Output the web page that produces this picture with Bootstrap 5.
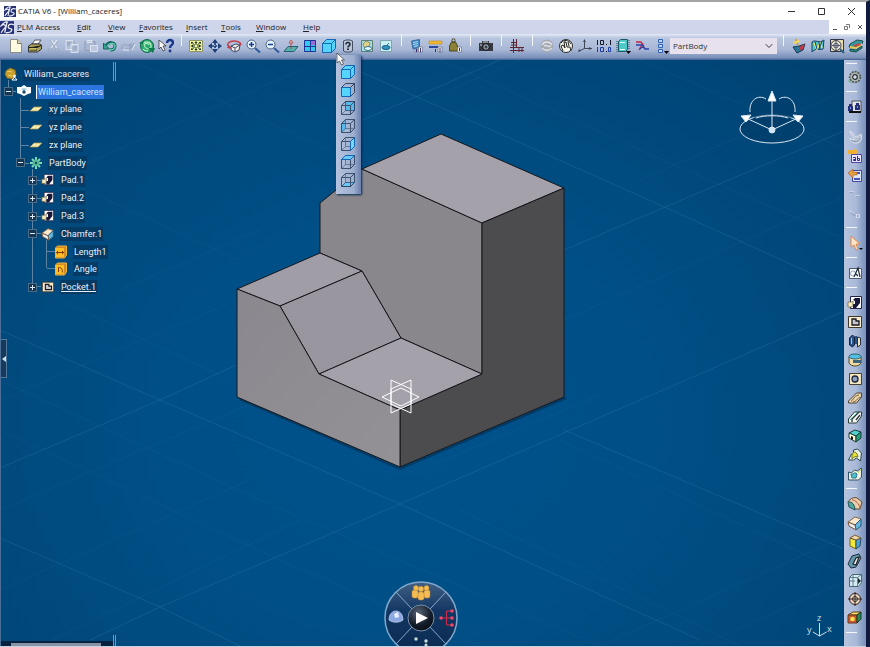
<!DOCTYPE html>
<html lang="en">
<head>
<meta charset="utf-8">
<meta name="viewport" content="width=device-width, initial-scale=1">
<title>CATIA V6 - [William_caceres]</title>
<link href="https://cdn.jsdelivr.net/npm/bootstrap@5.3.0/dist/css/bootstrap.min.css" rel="stylesheet">
<style>
body{font-family:"Open Sans","Noto Sans",sans-serif;font-size:8px;line-height:12px;color:#222;background:#0a1630}
svg{display:block}
.app-shell{border-top:2px solid #a5a5a5;border-right:4px solid #101a3c}
.title-bar{height:18px;background:#fff;padding-left:4px}
.title-text{padding-left:2px}
.menu-bar{height:14px;background:#cfd5ea}
.menu-bar a{color:#222;text-decoration:none}
.m-items{padding-left:3px}
.mi-1{width:60px}.mi-2{width:31px}.mi-3{width:47px}.mi-4{width:35px}
.win-btn{width:30px;height:16px}
.mdi-set{background:#fff;width:37px;height:14px}
.plain{border:0;padding:0;background:none;display:flex;align-items:center;justify-content:center;min-width:0}
.tool-bar{height:26px;padding-left:7px;background:linear-gradient(#e6eaf5,#b9c6df 15%,#a8b7d5 60%,#7890b9 92%,#3c5d8d)}
.tool-bar svg,.rail svg{width:16px;height:16px}
.grp{height:24px}
.g9{width:168px}.g11{width:208px}.g3{width:57px}.g1{width:19px}.g7{width:132px}.g4{width:76px}
.sep{width:12px;height:24px;flex:none}
.sep::before{content:"";display:block;width:1px;height:11px;margin:1px auto 0;background:#f4f6fb}
.body-pick{width:107px;height:16px;font-size:8px;line-height:12px;padding:0 12px 0 2px;border:1px solid #e9e3ef;border-radius:0;background-color:#e6e1ec;color:#333;background-position:right 3px center;background-size:8px 8px;flex:none}
.rail{width:23px;border-left:1px solid #22334f;background:linear-gradient(90deg,#b7c4de,#a9b9d8 55%,#7890bb);padding-bottom:6px}
.rail button{width:22px;height:19px}
.rule{height:11px;padding:5px 0 0 2px}
.rule::before{content:"";display:block;width:11px;height:1px;background:#f4f6fb}
.rule-top{height:7px;padding-top:3px}
.view{background:radial-gradient(ellipse at 48% 62%,#00528c 0,#005087 35%,#00487b 75%,#004271 100%);border-left:1px solid #4b6f96}
.fly{left:17px;top:21px;width:25px;padding:8px 0 5px;z-index:5;background:linear-gradient(90deg,#b4c2dd,#9dafd0 70%,#6880ac);box-shadow:1px 1px 2px #002b50}
.fly button{width:24px;height:18px}
.pointer{left:17px;top:17px;z-index:6;pointer-events:none}
.tree{height:231px;width:112px;margin-top:5px;color:#e6eff7;font-family:Roboto,"Open Sans",sans-serif;font-size:9px}
.tree-lines{left:0;top:0;z-index:0}
.twig{flex:1 1 0;min-height:0}
.twig svg{flex:none;width:14px;height:14px}
.twig a{color:inherit;text-decoration:none;background:#063b65;line-height:14px;padding:0 1px;margin-left:5px;white-space:nowrap}
.twig .picked{background:#2c74e0;color:#cfe4ff;border-left:1px solid #fff}
.twig .under{text-decoration:underline}
.lv0,.lv1{padding-left:3px}.lv2{padding-left:28px}.lv2x{padding-left:15px}.lv3{padding-left:27px}.lv4{padding-left:53px}
.expand{width:9px;height:9px;border:1px solid #4d6c88;background:#123654;color:#fff;position:relative}
.expand::before,.plus::after{content:"";position:absolute;background:#dbe9f5;left:1px;top:3px;width:5px;height:1px}
.plus::after{left:3px;top:1px;width:1px;height:5px}
.lv1 .expand,.lv2x .expand,.lv3 .expand{flex:none;margin-right:4px}
.split{left:112px;width:3px;border:solid #7396b8;border-width:0 1px}
.split-a{top:2px;height:19px}.split-b{bottom:0;height:11px}
.handle{left:0;top:279px;width:6px;height:39px;background:#163a5c;border:1px solid #54789b;border-left:0}
.status{left:0;bottom:0;width:112px;height:5px;background:#06213f;padding:2px 12px 0 10px}
.status div{height:3px;background:#8693a5}
.compass{right:34px;top:29px}.axes{right:8px;bottom:5px}.wheel{left:50%;bottom:0;margin-left:-39px}
.axes text{font-size:9px;fill:#cfe0ee}
.bottom-edge{height:1px;background:#c9d3de}
</style>
<script src="https://cdn.jsdelivr.net/npm/bootstrap@5.3.0/dist/js/bootstrap.bundle.min.js"></script>
</head>
<body>
<svg width="0" height="0" class="position-absolute" aria-hidden="true">
<defs>
<linearGradient id="gLeft" x1="0" y1="0" x2="1" y2="1"><stop offset="0" stop-color="#8a888e"/><stop offset="1" stop-color="#949196"/></linearGradient>
<radialGradient id="gBall" cx=".4" cy=".3" r=".8"><stop offset="0" stop-color="#56657a"/><stop offset=".6" stop-color="#131c28"/><stop offset="1" stop-color="#070b12"/></radialGradient>
<linearGradient id="gWheel" x1="0" y1="0" x2="0" y2="1"><stop offset="0" stop-color="#426084"/><stop offset=".4" stop-color="#123763"/><stop offset="1" stop-color="#0b2a50"/></linearGradient>
</defs>
<symbol id="logo" viewBox="0 0 12 11"><path fill="#252f72" d="M0 0h12v11H0z"/><path fill="none" stroke="#e8ebf6" stroke-width="1.100" d="M7 1C5 0 2 2 1 4c3-2 5 0 3 2-1 1-2 2-3 4M12 3c-3-1-5 0-5 2s4 1 3 3-3 2-5 2M6 1L4 10"/></symbol>
<symbol id="new" viewBox="0 0 16 16"><path fill="#fffbe0" stroke="#8c8c86" d="M2.500 1.500h7l4 4v9h-11z"/><path fill="#d8d4b0" stroke="#777" d="M9.500 1.500v4h4"/></symbol>
<symbol id="print" viewBox="0 0 16 16"><path fill="#fff" stroke="#555" d="M5 6l3-4h6l-3 4z"/><path fill="#aaa25a" stroke="#333" d="M1.500 8l3-2h8l2 1v4l-4 3h-9z"/><path stroke="#222" d="M2 9.500h8l4-2M3 12h7"/><path stroke="#e8e060" d="M3 11h6"/></symbol>
<symbol id="cut" viewBox="0 0 16 16"><path fill="none" stroke="#dfe5f0" stroke-width="1.500" d="M5 2l6 9M11 2L5 11"/><g fill="none" stroke="#9aa7c0"><path d="M4 2l6 9M12 3L6 11"/><circle cx="4.500" cy="12.500" r="2"/><circle cx="11" cy="12.500" r="2"/></g></symbol>
<symbol id="copy" viewBox="0 0 16 16"><path fill="#b1bed8" stroke="#dbe2ee" d="M2 2.500h7v9H2zM7 6.500h7v8H7z"/><path stroke="#8e9cb7" d="M3 5h4M3 7h3M8 9h5M8 11h5M10 2.500V6"/></symbol>
<symbol id="paste" viewBox="0 0 16 16"><path fill="#a9b7d1" stroke="#8d9bb7" d="M2 3.500h10v9H2z"/><path fill="#bcc7dd" stroke="#dfe5f0" d="M7.500 7.500h7v6h-7zM4 2.500h5v2H4z"/></symbol>
<symbol id="undo" viewBox="0 0 16 16"><path fill="none" stroke="#14655f" stroke-width="3" d="M4 8c3-5 9-4 9 0s-3 4-5 4"/><path fill="#34a68e" stroke="#14655f" d="M1.500 5v6h6z"/><path fill="none" stroke="#62d2b6" stroke-width="1.300" d="M5 8c3-4 8-3 8 0s-3 4-5 4"/></symbol>
<symbol id="redo" viewBox="0 0 16 16"><path fill="none" stroke="#8e9db8" d="M2 11c-1-6 5-5 6-3l2-2v5H5M11 11l3-6M11 5v6"/><path fill="none" stroke="#e2e8f2" d="M3 12h6M12 12l3-6"/></symbol>
<symbol id="update" viewBox="0 0 16 16"><circle cx="8" cy="8" r="6.500" fill="#29a870" stroke="#116846"/><path fill="none" stroke="#a8eab8" stroke-width="1.300" d="M3 7c2-4 8-4 9 0s-4 5-6 2 2-5 4-2M4 11c1 2 3 2 5 2"/><path fill="#0f7b4d" d="M9 10h7l-2 5zM0 5l5-3-1 5z"/></symbol>
<symbol id="help" viewBox="0 0 16 16"><path fill="#fff" stroke="#333" stroke-width=".8" d="M1 2v9l2-2 2 4 2-1-2-4h3z"/><path fill="none" stroke="#17368a" stroke-width="2.300" d="M9 5c0-4 6-4 6 0 0 2-3 2-3 5"/><circle cx="12" cy="13" r="1.400" fill="#17368a"/></symbol>
<symbol id="fit" viewBox="0 0 16 16"><path fill="#f8f69b" stroke="#8c9467" d="M1.500 2.500h13v11h-13z"/><path stroke="#17342a" d="M8 4v3M8 9v3M4 8h3M9 8h3M4 4.500L6.500 7M12 4.500L9.500 7M4 11.500L6.500 9M12 11.500L9.500 9"/><path fill="#17342a" d="M6.500 5L8 3l1.500 2zM6.500 11L8 13l1.500-2zM5 6.500L2.500 8 5 9.500zM11 6.500L13.500 8 11 9.500zM3 4h2.500L3 6zM13 4h-2.500L13 6zM3 12h2.500L3 10zM13 12h-2.500L13 10z"/></symbol>
<symbol id="pan" viewBox="0 0 16 16"><path stroke="#1e3f77" stroke-width="1.700" stroke-dasharray="2 1" d="M8 2v12M2 8h12"/><path fill="#1e3f77" d="M5 5l3-4 3 4zM5 11l3 4 3-4zM5 5L1 8l4 3zM11 5l4 3-4 3z"/><path fill="#b9cdec" d="M5.500 5.500H7V7H5.500zM9 5.500h1.500V7H9zM5.500 9H7v1.500H5.500zM9 9h1.500v1.500H9z"/></symbol>
<symbol id="spin" viewBox="0 0 16 16"><path fill="#f1efe8" stroke="#434c69" d="M5 8l5-2 4 1-1 5-4 2-4-2z"/><path fill="none" stroke="#434c69" d="M5 8l4 2 5-3M9 10v4"/><path fill="none" stroke="#c43b48" stroke-width="1.500" d="M3 9C0 6 3 3 8 3s8 3 6 4"/><path fill="#c43b48" d="M1 10l5 1-3-4z"/></symbol>
<symbol id="zin" viewBox="0 0 16 16"><circle cx="6.500" cy="6.500" r="4.500" fill="#e3f1f9" stroke="#4a5f80"/><path stroke="#173c91" stroke-width="1.500" d="M6.500 4v5M4 6.500h5"/><path stroke="#345d9d" stroke-width="2.200" d="M10 10l5 4.500"/></symbol>
<symbol id="zout" viewBox="0 0 16 16"><circle cx="6.500" cy="6.500" r="4.500" fill="#e3f1f9" stroke="#4a5f80"/><path stroke="#173c91" stroke-width="1.500" d="M4 6.500h5"/><path stroke="#345d9d" stroke-width="2.200" d="M10 10l5 4.500"/></symbol>
<symbol id="normal" viewBox="0 0 16 16"><path fill="#55b2a9" stroke="#285d77" d="M1 13.500l4-5h10l-4 5z"/><path stroke="#a94457" d="M8 11V4"/><path fill="#f2e4d1" stroke="#b65359" d="M6 5l2-3 2 3z"/></symbol>
<symbol id="multi" viewBox="0 0 16 16"><path fill="#35cbe8" stroke="#1e3399" d="M2.500 2.500h11v11h-11z"/><path fill="#9c6ad6" d="M9 3h4v4H9z"/><path stroke="#1e3399" d="M8.500 3v10M3 8.500h10"/></symbol>
<symbol id="cube" viewBox="0 0 16 16"><path fill="#57d4fb" stroke="#1467b4" d="M1.500 5.500l4-4h9v9l-4 4h-9z"/><path fill="none" stroke="#1467b4" d="M1.500 5.500h9v9M10.500 5.500l4-4"/></symbol>
<symbol id="wire" viewBox="0 0 16 16"><path fill="none" stroke="#33455f" stroke-width=".9" d="M1.500 5.500h9v9h-9zM1.500 5.500l4-4h9v9l-4 4M10.500 5.500l4-4"/><path fill="none" stroke="#4c607e" stroke-width=".7" d="M5.500 1.500v9h9M1.500 14.500l4-4"/></symbol>
<symbol id="q" viewBox="0 0 16 16"><path fill="#bac4d8" stroke="#444d62" d="M3.500 3c2-1.500 7-1.500 9 0v10c-2 1.500-7 1.500-9 0z"/><path fill="none" stroke="#222939" stroke-width="1.600" d="M6 6.500c0-3 4-2.500 4 0 0 1.500-2 1-2 3"/><path fill="#222939" d="M7 10.500h2v1.500H7z"/></symbol>
<symbol id="hide" viewBox="0 0 16 16"><path fill="#a8dde0" stroke="#5d8075" d="M2.500 2.500h11v11h-11z"/><path fill="#e4d38a" stroke="#7a7448" stroke-width=".7" d="M4 6l3-3 4 2-1 4-4 2z"/><ellipse cx="9" cy="10.500" rx="3.500" ry="2" fill="#e9fafa" stroke="#28709c"/></symbol>
<symbol id="swap" viewBox="0 0 16 16"><path fill="#c9f1f4" stroke="#7ea3aa" d="M2.500 2.500h11v11h-11z"/><ellipse cx="8" cy="9.500" rx="4" ry="2" fill="#2e98bd" stroke="#205c88"/><path fill="none" stroke="#2f8093" d="M8 8l3-3"/></symbol>
<symbol id="stackA" viewBox="0 0 16 16"><path fill="#458bc6" stroke="#3c6ba5" d="M2.500 3l8-1.500v8L4 11z"/><path stroke="#a9d9ef" d="M4 4.500l5-1M4 6.500l5-1M5 8.500l4-1"/><path fill="#f3f4f8" stroke="#6a7084" stroke-width=".7" d="M9.500 9h4v5h-4zM6 11h2v3H6z"/><path stroke="#352f72" d="M11.500 10v4M7.500 11v3"/></symbol>
<symbol id="ruler" viewBox="0 0 16 16"><path fill="#f0b92d" stroke="#c18a2a" stroke-width=".6" d="M1 3h13v3H1z"/><path stroke="#29489d" stroke-width="2" d="M1 9h9"/><path fill="#f3f4f8" stroke="#6a7084" stroke-width=".7" d="M10 9h4v5h-4z"/><path stroke="#352f72" d="M12 10v4M7.500 11v3"/></symbol>
<symbol id="mass" viewBox="0 0 16 16"><path fill="#8d8135" stroke="#4a4423" d="M3.500 6l1-2h4l1 2 1 2v5h-8V8z"/><circle cx="6.500" cy="2.500" r="1.700" fill="none" stroke="#4a4423"/><path fill="#f3f4f8" stroke="#6a7084" stroke-width=".7" d="M10.500 9h4v5h-4z"/><path stroke="#352f72" d="M12.500 10v3"/></symbol>
<symbol id="camera" viewBox="0 0 16 16"><path fill="#353741" d="M1 5h3V3h7v2h4v8H1z"/><circle cx="8" cy="9" r="3.300" fill="#9da3ae" stroke="#111"/><circle cx="8" cy="9" r="1.500" fill="#30404d"/><path stroke="#d9dde4" d="M5 4h5M2 7h2"/></symbol>
<symbol id="hash" viewBox="0 0 16 16"><path fill="none" stroke="#5a2433" d="M4.500 1v14M7.500 1v8.500M1 9.500h14M1 12.500h14M2 4.500h6M2 7h6M10 9v5M13 9v5"/></symbol>
<symbol id="swirl" viewBox="0 0 16 16"><circle cx="8" cy="8" r="6.500" fill="#a5a9b1"/><path fill="none" stroke="#e2e5ea" stroke-width="1.300" d="M3 7c2-4 8-4 10 0M3 10c2 3 8 3 10 0M5 8c2-2 4 2 7 0"/></symbol>
<symbol id="globe" viewBox="0 0 16 16"><circle cx="8" cy="8" r="6.500" fill="#f5f5ed" stroke="#2b2d30"/><path fill="none" stroke="#222" d="M5 13L3 8l2-1 2 3-1-6h2l1 5h3l1 4M3 5c3-4 8-3 10 1M10 4l1 4"/></symbol>
<symbol id="axis" viewBox="0 0 16 16"><path fill="none" stroke="#404757" d="M7.500 2v8.500H15M7.500 10.500L2 13"/><path fill="#404757" d="M6 4l1.500-3L9 4zM12 9l3 1.500-3 1.500zM1 14l1-3 2 2z"/></symbol>
<symbol id="dims" viewBox="0 0 16 16"><path fill="none" stroke="#171b2d" d="M1.500 2v5M4.500 2.500h3v4h-3zM14.500 2v5"/><path fill="none" stroke="#1b3eab" d="M1.500 9v5M4.500 9.500h3v4h-3zM12.500 9.500h2v4h-2z"/><path fill="#111" d="M10 6h1v1h-1zM10 13h1v1h-1z"/></symbol>
<symbol id="film" viewBox="0 0 16 16"><path fill="#4ec9c9" stroke="#195666" d="M3.500 3.500l2-2h7v10l-2 2h-7z"/><path stroke="#134a56" stroke-dasharray="1 1" d="M2 3v11M14 2v10"/><path fill="none" stroke="#e1ffff" d="M5 4.500h5M5 11.500h5"/><path fill="#000" d="M11 13h5l-2.500 3z"/></symbol>
<symbol id="fx" viewBox="0 0 16 16"><path fill="none" stroke="#c62b3d" stroke-width="1.400" d="M2 4h5l4 7M5 12l4-7"/><path fill="none" stroke="#2d42aa" stroke-width="1.300" d="M2 7h6l3 4h4M6 11l4-4"/></symbol>
<symbol id="list" viewBox="0 0 16 16"><path fill="#c5d4f0" stroke="#2d62b8" d="M5.500 1.500h4v3h-4zM5.500 6.500h4v3h-4zM5.500 11.500h4v3h-4z"/><path fill="#000" d="M11 13h5l-2.500 3z"/></symbol>
<symbol id="boatA" viewBox="0 0 16 16"><path fill="#29799a" stroke="#153950" d="M2 9l6-1 6-2-2 6-6 3z"/><path fill="#ca3246" d="M8 9l6-3-2 5-4 2z"/><path stroke="#c49d41" stroke-width="1.500" d="M5 1l2 7"/><path fill="#f1d85a" d="M2 4l6-2 1 2-6 2z"/></symbol>
<symbol id="mapA" viewBox="0 0 16 16"><path fill="#4ec8be" stroke="#1c386a" d="M2 4c4-3 7 2 12-2l-1 9c-5 2-6-2-11 3z"/><path fill="none" stroke="#e8ea5e" stroke-width="1.500" d="M4 5l3 6 3-6 2 5"/><path stroke="#203880" d="M5 4l2 7M9 4l1 7M12 3l-3 8"/></symbol>
<symbol id="target" viewBox="0 0 16 16"><path fill="#e8dcac" stroke="#333447" d="M1.500 1.500h13v12h-13z"/><circle cx="7" cy="7.500" r="5" fill="#e9e4d2" stroke="#3a4053"/><circle cx="7" cy="7.500" r="2.300" fill="none" stroke="#49516a"/><path stroke="#555b70" d="M7 3v9M3 7.500h8"/><path stroke="#2b5d84" stroke-width="2" d="M11 11l4 4"/></symbol>
<symbol id="layers" viewBox="0 0 16 16"><path fill="#309b9b" stroke="#234e56" d="M2 6l7-4 6 1-1 3-7 4-6-1z"/><path fill="#e3ce4c" d="M2 8l6 1 6-4v3l-7 3-5-1z"/><path fill="#c2454a" d="M5 7l7-2 1 2-6 2z"/><path fill="#2b9290" stroke="#184b4a" d="M2 11l6 1 6-4v2l-6 4-6-1z"/></symbol>
<symbol id="gear" viewBox="0 0 16 16"><circle cx="8" cy="8" r="5.300" fill="#b1b8b4" stroke="#4f5b5a" stroke-width="1.800" stroke-dasharray="2 1"/><circle cx="8" cy="8" r="2.300" fill="#dde" stroke="#26302f" stroke-width="1.200"/><path stroke="#63b776" d="M1 12l4 2"/></symbol>
<symbol id="bino" viewBox="0 0 16 16"><path fill="#dfe3ea" stroke="#222" stroke-width=".7" d="M5 2h9v11H5z"/><path fill="#242f77" d="M1 7h5v5H1zM8 6h5v5H8zM2 5h3v2H2zM9 4h3v2H9z"/><path fill="#7d9be0" d="M3 8h1v2H3zM10 7h1v2h-1z"/><path stroke="#111" stroke-width="2" d="M2 13h12"/></symbol>
<symbol id="moon" viewBox="0 0 16 16"><path fill="#bbc4d5" stroke="#dde3ee" d="M3 2c1 2 4 1 4 4s5 1 7-1c2 5-1 10-6 9-2 0-5-2-5-5 1 1 3 2 4 1 1-2-4-3-4-8z"/><path fill="none" stroke="#8491ad" d="M4 11c3 3 8 2 9-2"/></symbol>
<symbol id="tagA" viewBox="0 0 16 16"><path fill="#efaf30" d="M1 2h6l1-2 3 4-3 3-1-1H1z"/><path fill="#ece7f8" stroke="#5143a1" d="M4.500 6.500h10v8h-10z"/><path fill="none" stroke="#2d2d91" d="M6 9.500h2.500v3.500M8.500 11.500h-2v1h2M10.500 8v4.500h2v-2h-2"/></symbol>
<symbol id="tagB" viewBox="0 0 16 16"><path fill="#dce5fa" stroke="#4945a0" d="M5.500 3.500h9v11h-9z"/><path stroke="#4455b9" stroke-width="2" d="M8 6h5M7 12h6"/><path fill="#e39e40" stroke="#a15e2b" stroke-width=".6" d="M1 6l5-4v3h4v3H6v3z"/></symbol>
<symbol id="faint" viewBox="0 0 16 16"><path fill="none" stroke="#cbd3e4" d="M2 5.500h5M8 9.500h5"/><path stroke="#95a4c3" d="M3 6.500h3M9 10.500h4"/></symbol>
<symbol id="faintB" viewBox="0 0 16 16"><path fill="none" stroke="#d4daea" d="M2 6c2-2 3 3 5 1M9.500 9.500h3v3h-3z"/><path stroke="#8d9dbd" d="M4 8l4 3"/></symbol>
<symbol id="select" viewBox="0 0 16 16"><path fill="#f9e4c4" stroke="#e08a50" d="M4 1v11l3-2 2 5 2-1-2-5h4z"/><path fill="#000" d="M12 13h4l-2 2z"/></symbol>
<symbol id="sketch" viewBox="0 0 16 16"><path fill="#f9fbff" stroke="#4f5a6c" d="M2.500 3.500h12v10h-12z"/><circle cx="6" cy="8.500" r="2.500" fill="none" stroke="#9aa6c0"/><path fill="none" stroke="#222c39" stroke-width="1.200" d="M7 12l4-9 2 9M9 9l2 2"/></symbol>
<symbol id="pad" viewBox="0 0 16 16"><path fill="#fff" stroke="#232347" d="M3.500 1.500h11v12h-11z"/><path fill="#17183a" d="M6 5l2-2h5v5l-4 5H6V9h2V6z"/><path fill="#f3ebc4" stroke="#675c34" stroke-width=".7" d="M1 7h4l1-1v4l-1 2H1z"/></symbol>
<symbol id="pocket" viewBox="0 0 16 16"><path fill="#f9edd0" stroke="#41382d" d="M1.500 2.500h13v11h-13z"/><path fill="#c7c8d0" stroke="#181820" stroke-width="1.300" d="M5 5h4v2h3v4H5z"/></symbol>
<symbol id="pair" viewBox="0 0 16 16"><path fill="#28548a" stroke="#14223a" d="M2.500 5l3-3 2 2v8l-2 2-3-2z"/><path fill="#f1e6bb" stroke="#232c3e" d="M10.500 4l3 1v7l-3 2z"/><path stroke="#28548a" stroke-width="2" d="M9 3v8"/><path stroke="#9cc1e4" d="M4.500 5v6"/></symbol>
<symbol id="groove" viewBox="0 0 16 16"><path fill="#f0dca0" stroke="#514728" d="M2 5h12v6c-2 4-10 4-12 0z"/><ellipse cx="8" cy="4.500" rx="6" ry="2.500" fill="#57bfdf" stroke="#26647a"/><path fill="#3c6379" d="M6 8h8v3H6z"/></symbol>
<symbol id="hole" viewBox="0 0 16 16"><path fill="#f3e6be" stroke="#4b412d" d="M2.500 2.500h12v11h-12z"/><circle cx="8" cy="8" r="3" fill="#8fa1c5" stroke="#1b2439" stroke-width="1.300"/></symbol>
<symbol id="rib" viewBox="0 0 16 16"><path fill="#ead5ac" stroke="#4e4232" d="M1.500 11l8-8h5v4l-5 6h-8z"/><path fill="none" stroke="#785f3f" d="M4 11c3-1 2-5 8-6M6 12c3 0 4-4 8-5"/></symbol>
<symbol id="slot" viewBox="0 0 16 16"><path fill="#f6f7f3" stroke="#243d37" d="M1.500 10l6-7h7v4l-5 7h-8z"/><path fill="none" stroke="#263039" stroke-width="1.300" d="M5 13v-3l7-7M9 11l4-5"/><path stroke="#46a69b" d="M3 11l7-7"/></symbol>
<symbol id="solid" viewBox="0 0 16 16"><path fill="#53d4ce" stroke="#193c3d" d="M2 5l6-3 6 2-5 4z"/><path fill="#fff9db" stroke="#193c3d" d="M2 5l7 3v6l-7-4z"/><path fill="#24a378" stroke="#193c3d" d="M9 8l5-4v6l-5 4z"/><path fill="#111" d="M4 8l2 1v3l-2-1z"/></symbol>
<symbol id="loft" viewBox="0 0 16 16"><path fill="#e9f1e0" stroke="#2c484f" d="M1.500 13l3-6h2v-4l4-1 4 4-1 8-4-3-3 2z"/><path fill="#e5e334" stroke="#77721e" d="M5 8c2-5 5-3 6 2-3-1-4 0-6 2z"/></symbol>
<symbol id="loftB" viewBox="0 0 16 16"><path fill="#f0eee1" stroke="#305165" d="M1.500 6l3 1 3-3 3 1 4-3v9l-3 3h-10z"/><path fill="#49c1cc" stroke="#2c7890" d="M4 8c3 1 3-3 6 0l-1 4H5z"/><path stroke="#b9d950" d="M11 7l3-4"/></symbol>
<symbol id="fillet" viewBox="0 0 16 16"><path fill="#e8d0ac" stroke="#62472c" d="M1 6c2-4 7-5 9-4l5 4-2 7H8z"/><path fill="#50a69b" stroke="#28535a" d="M1 6c4-1 7 3 7 8l-6-3z"/><path fill="none" stroke="#bd5148" d="M5 4c4 0 7 4 8 8"/></symbol>
<symbol id="chamfer" viewBox="0 0 16 16"><path fill="#f6e9cd" stroke="#8a6846" d="M1 7l7-5 6 2-6 6z"/><path fill="#64b8de" stroke="#26557d" d="M8 10l6-6v7l-5 4z"/><path fill="#eceff2" stroke="#765337" d="M1 7l7 3 1 5-7-4z"/></symbol>
<symbol id="draft" viewBox="0 0 16 16"><path fill="#f2e737" stroke="#6f6822" d="M3 4l6 2v9l-6-3z"/><path fill="#4ba2ce" stroke="#254c69" d="M9 6l5-2-1 8-4 3z"/><path fill="#eed5a4" stroke="#725c40" d="M3 4l5-3 6 3-5 2z"/></symbol>
<symbol id="shell" viewBox="0 0 16 16"><path fill="#5f97ac" stroke="#202c3d" d="M1 11l4-8 7-2 2 4-5 9-5 1z"/><path fill="#edf3f5" stroke="#222" stroke-width="1.200" d="M6 11l3-6 3-1-3 8z"/></symbol>
<symbol id="thick" viewBox="0 0 16 16"><path fill="#d3eaf1" stroke="#466876" d="M2.500 5.500l3-3h9v8l-3 4h-9z"/><path fill="none" stroke="#466876" stroke-width=".8" d="M2.500 5.500h8v9M10.500 5.500l4-3M6 2v12M2 9h6"/><path fill="#17272e" d="M11 6l3 3-3 3z"/></symbol>
<symbol id="cross" viewBox="0 0 16 16"><circle cx="8" cy="8" r="5.500" fill="#f0d9be" stroke="#33231e"/><circle cx="8" cy="8" r="2.500" fill="#eee" stroke="#33231e"/><path stroke="#33231e" d="M8 1v14M1 8h14"/></symbol>
<symbol id="scale" viewBox="0 0 16 16"><path fill="#ffe05b" stroke="#5e3c21" d="M1 5l5-3h8l-4 3z"/><path fill="#d7532f" stroke="#5e3c21" d="M1 5h9v8H1z"/><path fill="#268b53" stroke="#173b29" d="M10 5l4-3v7l-4 4z"/><circle cx="5.500" cy="9" r="2.300" fill="#eee44b"/></symbol>
<symbol id="prod" viewBox="0 0 14 14"><path fill="#c69e2b" stroke="#836c27" d="M2 4l4-3 5 2 1 5-4 4-5-1-2-4z"/><path fill="none" stroke="#ead06c" d="M3 4l5 1M4 8l4 1"/><circle cx="10.500" cy="9" r="1.300" fill="#fff"/><path fill="none" stroke="#fff" d="M8 13l2.500-3 2.500 3z"/></symbol>
<symbol id="part" viewBox="0 0 14 14"><path fill="#fff" d="M0 2l4 0 3-2 3 2h4v6l-3 1-4 2-4-2-3-1z"/><path fill="#9fd0dd" d="M4 4l3-1 3 1-3 2z"/><circle cx="7" cy="7" r="1.700" fill="#1e4970"/></symbol>
<symbol id="plane" viewBox="0 0 14 14"><path fill="#f5eaa9" stroke="#ad9b58" stroke-width=".7" d="M1 9l4-4h8L9 9z"/></symbol>
<symbol id="bodyi" viewBox="0 0 14 14"><path stroke="#7edbb4" stroke-width="2" d="M7 1v12M1 7h12M3 3l8 8M11 3l-8 8"/><circle cx="7" cy="7" r="3.500" fill="#56b897"/><circle cx="7" cy="7" r="1.200" fill="#17485d"/></symbol>
<symbol id="param" viewBox="0 0 14 14"><path fill="#d28b25" stroke="#f0b43c" d="M1.500 3l2-2h9v9l-2 3h-9z"/><path fill="#ffbd22" d="M2 3h8v9H2z"/><path stroke="#7d3b12" d="M3 7.500h7"/><path fill="#7d3b12" d="M2 7.500l2-2v4zM10 7.500l-2-2v4z"/></symbol>
<symbol id="angle" viewBox="0 0 14 14"><path fill="#d28b25" stroke="#f0b43c" d="M1.500 3l2-2h9v9l-2 3h-9z"/><path fill="#ffbd22" d="M2 3h8v9H2z"/><path fill="none" stroke="#7d3b12" d="M4.500 10V5.500h1c2 0 3 2 3 5"/></symbol>
</svg>

<div class="app-shell vh-100 d-flex flex-column overflow-hidden">
<header>
<div class="title-bar d-flex align-items-center">
<svg width="12" height="11"><use href="#logo"/></svg><span class="title-text flex-fill">CATIA V6 - [William_caceres]</span>
<button class="plain win-btn" aria-label="Minimize"><svg width="9" height="9" stroke="#333"><path d="M1 4.500h7"/></svg></button>
<button class="plain win-btn" aria-label="Maximize"><svg width="9" height="9" fill="none" stroke="#333"><path d="M1.500 1.500h6v6h-6z"/></svg></button>
<button class="plain win-btn" aria-label="Close"><svg width="9" height="9" stroke="#333"><path d="M1 1l7 7M8 1L1 8"/></svg></button>
</div>
<nav class="menu-bar d-flex align-items-center" aria-label="Main menu">
<svg width="14" height="13" class="flex-shrink-0"><use href="#logo"/></svg>
<div class="d-flex flex-fill m-items">
<a href="#" class="mi-1"><u>P</u>LM Access</a><a href="#" class="mi-2"><u>E</u>dit</a><a href="#" class="mi-2"><u>V</u>iew</a><a href="#" class="mi-3"><u>F</u>avorites</a><a href="#" class="mi-4"><u>I</u>nsert</a><a href="#" class="mi-4"><u>T</u>ools</a><a href="#" class="mi-3"><u>W</u>indow</a><a href="#"><u>H</u>elp</a>
</div>
<div class="mdi-set d-flex justify-content-around">
<button class="plain" aria-label="Minimize document"><svg width="8" height="8" stroke="#555"><path d="M2 6.500h4"/></svg></button>
<button class="plain" aria-label="Restore document"><svg width="8" height="8" fill="none" stroke="#777"><path d="M3 1.500h3.500V5M1.500 3.500h3v3h-3z"/></svg></button>
<button class="plain" aria-label="Close document"><svg width="8" height="8" stroke="#555"><path d="M2 2l4 4M6 2L2 6"/></svg></button>
</div>
</nav>
<div class="tool-bar d-flex align-items-start" role="toolbar" aria-label="Standard tools">
<div class="grp g9 d-flex flex-shrink-0">
<button class="plain flex-fill" aria-label="New"><svg><use href="#new"/></svg></button>
<button class="plain flex-fill" aria-label="Print"><svg><use href="#print"/></svg></button>
<button class="plain flex-fill" aria-label="Cut"><svg><use href="#cut"/></svg></button>
<button class="plain flex-fill" aria-label="Copy"><svg><use href="#copy"/></svg></button>
<button class="plain flex-fill" aria-label="Paste"><svg><use href="#paste"/></svg></button>
<button class="plain flex-fill" aria-label="Undo"><svg><use href="#undo"/></svg></button>
<button class="plain flex-fill" aria-label="Redo"><svg><use href="#redo"/></svg></button>
<button class="plain flex-fill" aria-label="Update"><svg><use href="#update"/></svg></button>
<button class="plain flex-fill" aria-label="What's this"><svg><use href="#help"/></svg></button>
</div><div class="sep"></div>
<div class="grp g11 d-flex flex-shrink-0">
<button class="plain flex-fill" aria-label="Fit all in"><svg><use href="#fit"/></svg></button>
<button class="plain flex-fill" aria-label="Pan"><svg><use href="#pan"/></svg></button>
<button class="plain flex-fill" aria-label="Rotate"><svg><use href="#spin"/></svg></button>
<button class="plain flex-fill" aria-label="Zoom in"><svg><use href="#zin"/></svg></button>
<button class="plain flex-fill" aria-label="Zoom out"><svg><use href="#zout"/></svg></button>
<button class="plain flex-fill" aria-label="Normal view"><svg><use href="#normal"/></svg></button>
<button class="plain flex-fill" aria-label="Multi view"><svg><use href="#multi"/></svg></button>
<div class="position-relative flex-fill d-flex">
<button class="plain flex-fill" aria-label="Isometric view"><svg><use href="#cube"/></svg></button>
<div class="fly position-absolute" role="menu" aria-label="Views">
<button class="plain" role="menuitem" aria-label="Isometric"><svg><use href="#cube"/></svg></button>
<button class="plain" role="menuitem" aria-label="Front"><svg viewBox="0 0 16 16"><path fill="#57d4fb" stroke="#1467b4" d="M1.500 5.500h9v9h-9z"/><path fill="none" stroke="#33455f" d="M1.500 5.500l4-4h9v9l-4 4M10.500 5.500l4-4"/></svg></button>
<button class="plain" role="menuitem" aria-label="Back"><svg viewBox="0 0 16 16"><path fill="#57b8ec" stroke="#1467b4" d="M5.500 1.500h9v9h-9z"/><use href="#wire"/></svg></button>
<button class="plain" role="menuitem" aria-label="Left"><svg viewBox="0 0 16 16"><path fill="#57b8ec" d="M1 6l5-4v9l-5 4z"/><use href="#wire"/></svg></button>
<button class="plain" role="menuitem" aria-label="Right"><svg viewBox="0 0 16 16"><use href="#wire"/><path fill="#79d5fb" stroke="#1467b4" d="M10.500 5.500l4-4v9l-4 4z"/></svg></button>
<button class="plain" role="menuitem" aria-label="Top"><svg viewBox="0 0 16 16"><use href="#wire"/><path fill="#69c8f5" stroke="#1467b4" d="M1.500 5.500l4-4h9l-4 4z"/></svg></button>
<button class="plain" role="menuitem" aria-label="Bottom"><svg viewBox="0 0 16 16"><path fill="#69c8f5" stroke="#1467b4" d="M1.500 14.500l4-4h9l-4 4z"/><use href="#wire"/></svg></button>
</div>
<svg class="pointer position-absolute" viewBox="0 0 16 16"><path fill="#fff" stroke="#333" stroke-width=".7" d="M1 2v10l2.500-2 2 4 2-1-2-4h3z"/></svg>
</div>
<button class="plain flex-fill" aria-label="View mode"><svg><use href="#q"/></svg></button>
<button class="plain flex-fill" aria-label="Hide or show"><svg><use href="#hide"/></svg></button>
<button class="plain flex-fill" aria-label="Swap visible space"><svg><use href="#swap"/></svg></button>
</div><div class="sep"></div>
<div class="grp g3 d-flex flex-shrink-0">
<button class="plain flex-fill" aria-label="Measure between"><svg><use href="#stackA"/></svg></button>
<button class="plain flex-fill" aria-label="Measure item"><svg><use href="#ruler"/></svg></button>
<button class="plain flex-fill" aria-label="Measure inertia"><svg><use href="#mass"/></svg></button>
</div><div class="sep"></div>
<div class="grp g1 d-flex flex-shrink-0"><button class="plain flex-fill" aria-label="Capture"><svg><use href="#camera"/></svg></button></div><div class="sep"></div>
<div class="grp g1 d-flex flex-shrink-0"><button class="plain flex-fill" aria-label="Work on support"><svg><use href="#hash"/></svg></button></div><div class="sep"></div>
<div class="grp g7 d-flex flex-shrink-0">
<button class="plain flex-fill" aria-label="Update all"><svg><use href="#swirl"/></svg></button>
<button class="plain flex-fill" aria-label="Manual update"><svg><use href="#globe"/></svg></button>
<button class="plain flex-fill" aria-label="Axis system"><svg><use href="#axis"/></svg></button>
<button class="plain flex-fill" aria-label="Mean dimensions"><svg><use href="#dims"/></svg></button>
<button class="plain flex-fill" aria-label="Catalog"><svg><use href="#film"/></svg></button>
<button class="plain flex-fill" aria-label="Knowledge"><svg><use href="#fx"/></svg></button>
<button class="plain flex-fill" aria-label="Tree filter"><svg><use href="#list"/></svg></button>
</div>
<select class="form-select body-pick mt-1" aria-label="In work object"><option>PartBody</option></select>
<div class="sep"></div>
<div class="grp g4 d-flex flex-shrink-0">
<button class="plain flex-fill" aria-label="Draft analysis"><svg><use href="#boatA"/></svg></button>
<button class="plain flex-fill" aria-label="Curvature analysis"><svg><use href="#mapA"/></svg></button>
<button class="plain flex-fill" aria-label="Tap analysis"><svg><use href="#target"/></svg></button>
<button class="plain flex-fill" aria-label="Apply material"><svg><use href="#layers"/></svg></button>
</div>
</div>
</header>

<div class="d-flex flex-fill overflow-hidden">
<main class="view flex-fill position-relative overflow-hidden">
<svg class="position-absolute w-100 h-100" viewBox="1 60 842 586" preserveAspectRatio="xMidYMid slice" role="img" aria-label="Part model">
<g stroke="#3f86b8" fill="none">
<g opacity=".25"><path d="M0 330L160 400 400 504 700 640M0 468L160 400 330 322M0 538L160 607 240 646M90 640L160 607 400 504 640 400 870 300M361 72L640 196 870 300M340 130L500 60M564 250L870 120M564 430L870 560"/></g>
<g opacity=".1"><path d="M0 380L260 500 600 646M0 430L280 560 480 646M60 300L230 380M0 590L250 480M40 646L300 520M0 400L237 300M0 510L260 400M20 160L238 260M130 60L330 150M0 200L140 140 300 70M440 60L640 150 870 250M640 60L870 160M564 320L870 185M560 440L870 585M420 470L600 395M600 646L870 525M460 510L740 646M700 646L870 570M120 290L260 230M450 90L520 60M640 180L870 80"/></g>
</g>
<path d="M239 399L400 469 566 398" fill="none" stroke="#00243f" stroke-width="2" opacity=".5"/>
<g stroke="#17171b" stroke-width="1" stroke-linejoin="round">
<path fill="#89868c" d="M320 203L362 169 482 223V374L401 338 362 271 320 253z"/>
<path fill="#a4a1ab" d="M362 169L441 134 564 188 482 223z"/>
<path fill="#4c4b4d" d="M482 223L564 188V397L400 467V410L482 374z"/>
<path fill="#a09da7" d="M237 289L320 253 362 271 280 306z"/>
<path fill="#99969f" d="M280 306L362 271 401 338 319 374z"/>
<path fill="#a4a1ab" d="M319 374L401 338 482 374 400 410z"/>
<path fill="url(#gLeft)" d="M237 289L280 306 319 374 400 410V467L237 397z"/>
</g>
<path d="M391 380l20 9v24l-20-9zM411 380l-20 9v24l20-9zM382 397l19-9 18 9-18 9z" fill="none" stroke="#fff"/>
</svg>

<nav class="tree position-relative d-flex flex-column" aria-label="Specification tree">
<svg class="tree-lines position-absolute" width="112" height="231" fill="none" stroke="#5f83a3"><path d="M7.500 15v12M8 26.500h7M19.500 33v65M20 45.500h8M20 62.500h8M20 80.500h8M20 98.500h8M31.500 104v118M32 115.500h8M32 133.500h8M32 151.500h8M32 168.500h8M45.500 175v28M46 186.500h8M46 203.500h8M32 221.500h8"/></svg>
<div class="twig lv0 d-flex align-items-center position-relative"><svg><use href="#prod"/></svg><a href="#">William_caceres</a></div>
<div class="twig lv1 d-flex align-items-center position-relative"><button class="plain expand" aria-label="Collapse"></button><svg><use href="#part"/></svg><a href="#" class="picked">William_caceres</a></div>
<div class="twig lv2 d-flex align-items-center position-relative"><svg><use href="#plane"/></svg><a href="#">xy plane</a></div>
<div class="twig lv2 d-flex align-items-center position-relative"><svg><use href="#plane"/></svg><a href="#">yz plane</a></div>
<div class="twig lv2 d-flex align-items-center position-relative"><svg><use href="#plane"/></svg><a href="#">zx plane</a></div>
<div class="twig lv2x d-flex align-items-center position-relative"><button class="plain expand" aria-label="Collapse"></button><svg><use href="#bodyi"/></svg><a href="#">PartBody</a></div>
<div class="twig lv3 d-flex align-items-center position-relative"><button class="plain expand plus" aria-label="Expand"></button><svg><use href="#pad"/></svg><a href="#">Pad.1</a></div>
<div class="twig lv3 d-flex align-items-center position-relative"><button class="plain expand plus" aria-label="Expand"></button><svg><use href="#pad"/></svg><a href="#">Pad.2</a></div>
<div class="twig lv3 d-flex align-items-center position-relative"><button class="plain expand plus" aria-label="Expand"></button><svg><use href="#pad"/></svg><a href="#">Pad.3</a></div>
<div class="twig lv3 d-flex align-items-center position-relative"><button class="plain expand" aria-label="Collapse"></button><svg><use href="#chamfer"/></svg><a href="#">Chamfer.1</a></div>
<div class="twig lv4 d-flex align-items-center position-relative"><svg><use href="#param"/></svg><a href="#">Length1</a></div>
<div class="twig lv4 d-flex align-items-center position-relative"><svg><use href="#angle"/></svg><a href="#">Angle</a></div>
<div class="twig lv3 d-flex align-items-center position-relative"><button class="plain expand plus" aria-label="Expand"></button><svg><use href="#pocket"/></svg><a href="#" class="under">Pocket.1</a></div>
</nav>
<div class="split split-a position-absolute"></div><div class="split split-b position-absolute"></div>
<button class="plain handle position-absolute" aria-label="Open side panel"><svg width="4" height="6"><path fill="#cfe0ee" d="M4 0v6L0 3z"/></svg></button>
<div class="status position-absolute"><div></div></div>

<svg class="compass position-absolute" width="74" height="58" fill="none" stroke="#dbe8f3" aria-hidden="true"><g fill="#003a66" fill-opacity=".5"><ellipse cx="37" cy="40" rx="32" ry="14"/><path d="M37 13C25 3 13 12 15 26l22 15zM37 13c12-10 24-1 23 13L37 41z" stroke="none"/></g><path d="M15 23c-1-12 8-18 16-13M60 23c1-12-8-18-16-13M21 29c9-3 23-3 32 0M37 41V8M37 41L11 29M37 41l26-12"/><path fill="#fff" d="M37 2l-4 10h8zM6 27l10-1-5 7zM68 27l-10-1 5 7z"/><circle cx="37" cy="41" r="3" fill="#cfe4f5"/></svg>

<svg class="wheel position-absolute" width="76" height="66" aria-hidden="true"><circle cx="38" cy="38" r="36" fill="url(#gWheel)" stroke="#83a8cd" stroke-width="1.500"/><path stroke="#83a8cd" d="M13 12l16 17M63 12L47 29M13 64l16-17M63 64L47 47"/><circle cx="38" cy="38" r="13" fill="url(#gBall)" stroke="#7590ae"/><path fill="#fff" d="M33 32l12 6-12 6z"/><g fill="#f3bd55" stroke="#c98a30" stroke-width=".5"><rect x="29" y="10" width="6" height="8" rx="2"/><rect x="41" y="10" width="6" height="8" rx="2"/><rect x="35" y="12" width="6" height="8" rx="2"/><circle cx="33" cy="8" r="2.500"/><circle cx="43.500" cy="8" r="2.500"/><circle cx="38" cy="9" r="2.700"/></g><path fill="#8ca7e2" stroke="#c7d6f4" stroke-width=".7" d="M6 40c0-12 14-12 14 0-4 3-10 3-14 0z"/><path fill="#e8effd" d="M11 34l4-2 1 5-4 1z"/><path fill="none" stroke="#cf2e4c" d="M57 38h12M69 31h-5.500v14H69"/><g fill="#ee4767"><circle cx="58" cy="38" r="1.800"/><circle cx="69" cy="31" r="1.800"/><circle cx="69" cy="38" r="1.800"/><circle cx="69" cy="45" r="1.800"/></g><g fill="#c9ddd9"><circle cx="33" cy="59" r="1.700"/><circle cx="43" cy="61" r="1.700"/><circle cx="43" cy="65" r="1.500"/></g></svg>

<svg class="axes position-absolute" width="30" height="34" aria-hidden="true"><path d="M14.500 16v13M14.500 29L8 25M14.500 29l7-4" fill="none" stroke="#cfe0ee"/><text x="12" y="14">z</text><text x="2" y="26">y</text><text x="22" y="25">x</text></svg>
</main>

<aside class="rail flex-shrink-0 overflow-hidden" role="toolbar" aria-label="Part design tools">
<div class="rule rule-top"></div>
<button class="plain" aria-label="Part design"><svg><use href="#gear"/></svg></button><div class="rule"></div>
<button class="plain" aria-label="Search"><svg><use href="#bino"/></svg></button><div class="rule"></div>
<button class="plain" aria-label="Refresh"><svg><use href="#moon"/></svg></button>
<button class="plain" aria-label="Text annotation"><svg><use href="#tagA"/></svg></button>
<button class="plain" aria-label="Flag note"><svg><use href="#tagB"/></svg></button>
<button class="plain" aria-label="Links"><svg><use href="#faint"/></svg></button>
<button class="plain" aria-label="Relations"><svg><use href="#faintB"/></svg></button><div class="rule"></div>
<button class="plain" aria-label="Select"><svg><use href="#select"/></svg></button><div class="rule"></div>
<button class="plain" aria-label="Sketch"><svg><use href="#sketch"/></svg></button><div class="rule"></div>
<button class="plain" aria-label="Pad"><svg><use href="#pad"/></svg></button>
<button class="plain" aria-label="Pocket"><svg><use href="#pocket"/></svg></button>
<button class="plain" aria-label="Shaft"><svg><use href="#pair"/></svg></button>
<button class="plain" aria-label="Groove"><svg><use href="#groove"/></svg></button>
<button class="plain" aria-label="Hole"><svg><use href="#hole"/></svg></button>
<button class="plain" aria-label="Rib"><svg><use href="#rib"/></svg></button>
<button class="plain" aria-label="Slot"><svg><use href="#slot"/></svg></button>
<button class="plain" aria-label="Solid combine"><svg><use href="#solid"/></svg></button>
<button class="plain" aria-label="Multi-sections solid"><svg><use href="#loft"/></svg></button>
<button class="plain" aria-label="Removed multi-sections solid"><svg><use href="#loftB"/></svg></button><div class="rule"></div>
<button class="plain" aria-label="Edge fillet"><svg><use href="#fillet"/></svg></button>
<button class="plain" aria-label="Chamfer"><svg><use href="#chamfer"/></svg></button>
<button class="plain" aria-label="Draft angle"><svg><use href="#draft"/></svg></button>
<button class="plain" aria-label="Shell"><svg><use href="#shell"/></svg></button>
<button class="plain" aria-label="Thickness"><svg><use href="#thick"/></svg></button>
<button class="plain" aria-label="Thread"><svg><use href="#cross"/></svg></button>
<button class="plain" aria-label="Scaling"><svg><use href="#scale"/></svg></button><div class="rule"></div>
</aside>
</div>
<div class="bottom-edge"></div>
</div>
</body>
</html>
